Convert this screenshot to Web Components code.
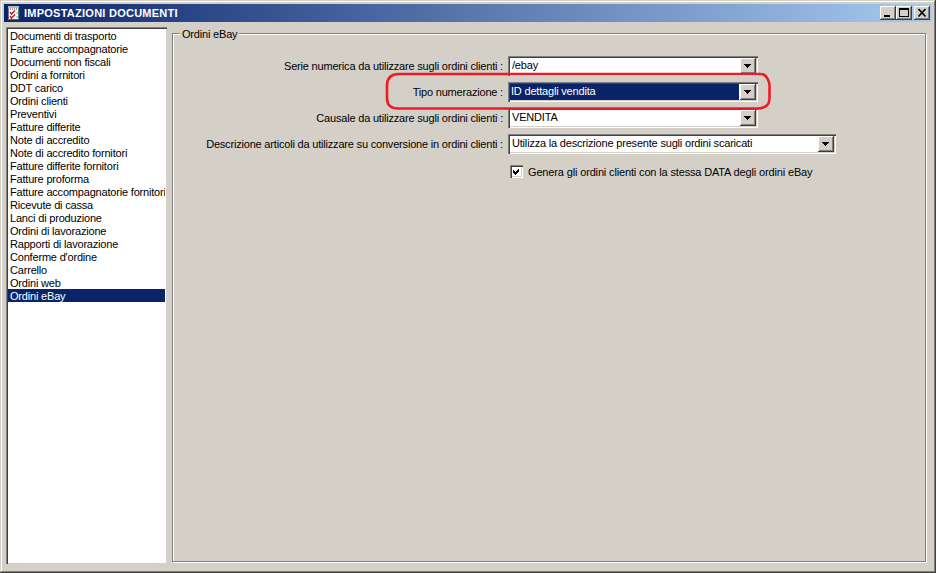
<!DOCTYPE html>
<html>
<head>
<meta charset="utf-8">
<style>
html,body{margin:0;height:100%;background:#d4d0c8;overflow:hidden}
</style>
</head>
<body>
<doc-window>
    <settings-list slot="side" selected="Ordini eBay"></settings-list>
    <group-box label="Ordini eBay">
        <form-row label="Serie numerica da utilizzare sugli ordini clienti :" value="/ebay" width="250"></form-row>
        <form-row label="Tipo numerazione :" value="ID dettagli vendita" width="250" selected></form-row>
        <form-row label="Causale da utilizzare sugli ordini clienti :" value="VENDITA" width="250"></form-row>
        <form-row label="Descrizione articoli da utilizzare su conversione in ordini clienti :" value="Utilizza la descrizione presente sugli ordini scaricati" width="328"></form-row>
        <check-row>Genera gli ordini clienti con la stessa DATA degli ordini eBay</check-row>
    </group-box>
</doc-window>
<script>
const FONT = `font:11px "Liberation Sans",Arial,sans-serif;letter-spacing:-.19px;`;

customElements.define('doc-window', class extends HTMLElement {
    constructor() {
        super();
        this.attachShadow({ mode: 'open' }).innerHTML = `
        <style>
        :host {
            display:flex;flex-direction:column;box-sizing:border-box;
            width:936px;height:573px;padding:4px;
            background:#d4d0c8;
            box-shadow:inset -1px -1px 0 #404040,inset 1px 1px 0 #d4d0c8,inset -2px -2px 0 #808080,inset 2px 2px 0 #fff;
            ${FONT}color:#000;
        }
        header {
            display:flex;align-items:center;flex:none;
            height:18px;padding:0 2px 0 3px;
            background:linear-gradient(90deg,#0a246a,#a6caf0);
        }
        h1 {
            flex:1;margin:0 0 0 3px;
            font:bold 11px "Liberation Sans",Arial,sans-serif;letter-spacing:.25px;color:#fff;
        }
        svg.logo {width:14px;height:16px;flex:none}
        .btn {
            box-sizing:border-box;width:16px;height:14px;flex:none;display:block;
            background:#d4d0c8;
            box-shadow:inset -1px -1px 0 #404040,inset 1px 1px 0 #fff,inset -2px -2px 0 #808080;
        }
        .btn.close {margin-left:2px}
        main {
            flex:1;min-height:0;display:flex;gap:5px;
            padding:5px 6px 5px 2px;
        }
        </style>
        <header>
            <svg class=logo viewBox="0 0 14 16">
                <rect x="1.5" y="1.5" width="10" height="13" fill="#fff" stroke="#5f7f86"/>
                <path d="M1 1h11v2H1z" fill="#b9b9b9"/>
                <path d="M3 4h1M5 4h1M7 4h1M9 4h1" stroke="#333"/>
                <path d="M3 7l1.5 2L8 5.5M3 11l1.5 2L8 9.5" fill="none" stroke="#d2142a" stroke-width="1.5"/>
                <path d="M9 8h2M9 12h2" stroke="#8aa"/>
                <path d="M12.5 2v13H3" fill="none" stroke="#2f3b40" stroke-width="1.2"/>
            </svg>
            <h1>IMPOSTAZIONI DOCUMENTI</h1>
            <svg class=btn viewBox="0 0 16 14"><path d="M4 9h6v2H4z"/></svg>
            <svg class=btn viewBox="0 0 16 14" shape-rendering="crispEdges"><path d="M3 2h10v9H3z M4 4v6h8V4z" fill-rule="evenodd"/></svg>
            <svg class="btn close" viewBox="0 0 16 14"><path d="M4.5 3l7 7.5M11.5 3l-7 7.5" fill="none" stroke="#000" stroke-width="1.7"/></svg>
        </header>
        <main>
            <slot name=side></slot>
            <slot></slot>
        </main>`;
    }
});

customElements.define('settings-list', class extends HTMLElement {
    constructor() {
        super();
        this.attachShadow({ mode: 'open' });
    }
    connectedCallback() {
        const items = ['Documenti di trasporto','Fatture accompagnatorie','Documenti non fiscali','Ordini a fornitori','DDT carico','Ordini clienti','Preventivi','Fatture differite','Note di accredito','Note di accredito fornitori','Fatture differite fornitori','Fatture proforma','Fatture accompagnatorie fornitori','Ricevute di cassa','Lanci di produzione','Ordini di lavorazione','Rapporti di lavorazione','Conferme d\'ordine','Carrello','Ordini web','Ordini eBay'];
        const sel = this.getAttribute('selected');
        this.shadowRoot.innerHTML = `
        <style>
        :host {
            display:block;box-sizing:border-box;flex:none;
            width:161px;height:100%;padding:2px;
            background:#fff;
            box-shadow:inset 1px 1px 0 #808080,inset 2px 2px 0 #404040,inset -1px -1px 0 #d4d0c8;
            overflow:hidden;
        }
        div {height:13px;line-height:14px;padding-left:2px;white-space:nowrap;overflow:hidden}
        .on {background:#0a246a;color:#fff}
        </style>
        ${items.map(t => `<div class="${t == sel ? 'on' : ''}">${t}</div>`).join('')}`;
    }
});

customElements.define('group-box', class extends HTMLElement {
    constructor() {
        super();
        this.attachShadow({ mode: 'open' });
    }
    connectedCallback() {
        this.shadowRoot.innerHTML = `
        <style>
        :host {
            display:block;position:relative;box-sizing:border-box;flex:1;
            margin-top:6px;height:calc(100% - 8px);
            padding:22px 0 0;
            border:1px solid #808080;
            box-shadow:1px 1px 0 #fff,inset 1px 1px 0 #fff;
        }
        span {
            position:absolute;left:7px;top:-7px;padding:0 2px;
            background:#d4d0c8;line-height:14px;
        }
        .rows {display:flex;flex-direction:column;gap:6px}
        </style>
        <span>${this.getAttribute('label')}</span>
        <div class=rows><slot></slot></div>`;
    }
});

customElements.define('form-row', class extends HTMLElement {
    constructor() {
        super();
        this.attachShadow({ mode: 'open' });
    }
    connectedCallback() {
        const on = this.hasAttribute('selected');
        this.shadowRoot.innerHTML = `
        <style>
        :host {display:flex;align-items:center;height:20px}
        label {
            flex:none;width:330px;text-align:right;white-space:nowrap;
            display:flex;justify-content:flex-end;
        }
        .combo {
            box-sizing:border-box;margin-left:5px;
            width:${this.getAttribute('width')}px;height:20px;padding:2px;
            display:flex;background:#fff;
            box-shadow:inset 1px 1px 0 #808080,inset 2px 2px 0 #404040,inset -1px -1px 0 #fff,inset -2px -2px 0 #d4d0c8;
        }
        .val {
            flex:1;padding-left:${on ? 1 : 2}px;line-height:15px;height:16px;white-space:nowrap;
            ${on ? 'background:#0a246a;color:#fff;margin-right:1px;' : ''}
        }
        .drop {
            flex:none;width:16px;height:16px;box-sizing:border-box;
            background:#d4d0c8;
            box-shadow:inset -1px -1px 0 #404040,inset 1px 1px 0 #fff,inset -2px -2px 0 #808080;
        }
        svg {display:block}
        </style>
        <label>${this.getAttribute('label')}</label>
        <div class=combo>
            <div class=val>${this.getAttribute('value')}</div>
            <div class=drop><svg width=16 height=16 viewBox="0 0 16 16" shape-rendering="crispEdges"><path d="M4 6h7v1h-1v1h-1v1h-1v1h-1v-1h-1v-1h-1v-1h-1z"/></svg></div>
        </div>`;
    }
});

customElements.define('check-row', class extends HTMLElement {
    constructor() {
        super();
        this.attachShadow({ mode: 'open' }).innerHTML = `
        <style>
        :host {display:flex;align-items:center;height:13px;padding:5px 0 0 337px;letter-spacing:-.15px}
        i {
            display:block;box-sizing:border-box;width:13px;height:13px;margin-right:5px;background:#fff;flex:none;
            box-shadow:inset 1px 1px 0 #808080,inset 2px 2px 0 #404040,inset -1px -1px 0 #fff,inset -2px -2px 0 #d4d0c8;
        }
        svg {display:block}
        </style>
        <i><svg width=13 height=13 viewBox="0 0 13 13" shape-rendering="crispEdges"><path d="M3 5h1v1h1v1h1v-1h1v-1h1v-1h1v3h-1v1h-1v1h-1v1h-1v-1h-1v-1h-1z"/></svg></i>
        <slot></slot>`;
    }
});

customElements.define('red-mark', class extends HTMLElement {
    constructor() {
        super();
        this.attachShadow({ mode: 'open' }).innerHTML = `
        <style>
        :host {position:absolute;left:0;top:0;pointer-events:none}
        svg {display:block}
        </style>
        <svg width=936 height=573 viewBox="0 0 936 573">
            <path d="M399 74H760Q765 74 767 78Q770 82 769.5 90V99Q769 108 758 108.5H398Q387.500 108.500 387 99V85Q387.500 74 399 74Z" fill="none" stroke="#ed1c24" stroke-width="2.6"/>
        </svg>`;
    }
});
</script>
<red-mark></red-mark>
</body>
</html>
